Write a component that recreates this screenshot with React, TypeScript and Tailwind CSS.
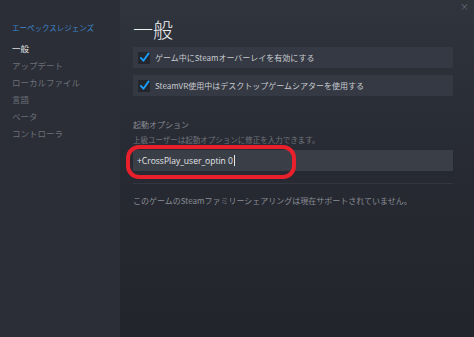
import React from 'react'

const font = { fontFamily: '"Noto Sans CJK JP", "Noto Sans", sans-serif' }

const navItems = ['アップデート', 'ローカルファイル', '言語', 'ベータ', 'コントローラ']

const CheckRow = ({ label }: { label: string }) => (
  <div className="flex items-center h-[21px] bg-[#353943] pl-[5px] gap-[5px]">
    <div className="w-[12px] h-[12px] bg-[#23262d] flex items-center justify-center">
      <svg width="11" height="11" viewBox="0 0 12 12">
        <path d="M2 6.5 L4.8 9.5 L10.5 1.5" fill="none" stroke="#1a9fff" strokeWidth="2" strokeLinecap="round" strokeLinejoin="round" />
      </svg>
    </div>
    <span className="text-[8px] leading-[12px] text-[#c9ccd1]">{label}</span>
  </div>
)

export default function App() {
  return (
    <div className="flex w-[474px] h-[337px] overflow-hidden" style={font}>
      {/* Sidebar */}
      <div className="w-[120px] h-full bg-[#2b2e36] pt-[22px] pl-[12px]">
        <div className="text-[7.5px] leading-[12px] text-[#3f87cf] whitespace-nowrap">エーペックスレジェンズ</div>
        <div className="mt-[6px] flex flex-col">
          <div className="text-[8.5px] leading-[17px] text-[#e6e8ea]">一般</div>
          {navItems.map((n) => (
            <div key={n} className="text-[8.5px] leading-[17px] text-[#6c7079]">{n}</div>
          ))}
        </div>
      </div>

      {/* Main */}
      <div className="relative flex-1 h-full bg-gradient-to-b from-[#30343d] via-[#272a32] to-[#22252c] pl-[13px] pr-[21px] pt-[18px]">
        <div className="absolute right-[5px] top-[2px] text-[9px] leading-[10px] text-[#6d717a]">×</div>

        <div className="text-[20px] leading-[24px] text-[#eef0f2] font-light">一般</div>

        <div className="mt-[5px] flex flex-col gap-[7px]">
          <CheckRow label="ゲーム中にSteamオーバーレイを有効にする" />
          <CheckRow label="SteamVR使用中はデスクトップゲームシアターを使用する" />
        </div>

        <div className="mt-[23px] text-[8px] leading-[12px] text-[#868a92]">起動オプション</div>
        <div className="mt-[3px] text-[7.5px] leading-[12px] text-[#6f737b] whitespace-nowrap">上級ユーザーは起動オプションに修正を入力できます。</div>

        <div className="mt-[4px] h-[21px] bg-[#3a3e47] flex items-center pl-[4px]">
          <span className="text-[8.5px] leading-[12px] text-[#e4e6e9]" style={{ fontFamily: '"Open Sans", "Noto Sans", sans-serif' }}>
            +CrossPlay_user_optin 0
          </span>
          <span className="ml-[1px] w-[1px] h-[11px] bg-[#e4e6e9]" />
        </div>

        <div className="mt-[12px] h-[1px] bg-[#33363e]" />

        <div className="mt-[11px] text-[8px] leading-[12px] text-[#8a8e96] whitespace-nowrap">このゲームのSteamファミリーシェアリングは現在サポートされていません。</div>

        {/* red highlight */}
        <div className="absolute left-[6px] top-[145px] w-[170px] h-[34px] border-[4px] border-[#e8202b] rounded-[13px]" />
      </div>
    </div>
  )
}
